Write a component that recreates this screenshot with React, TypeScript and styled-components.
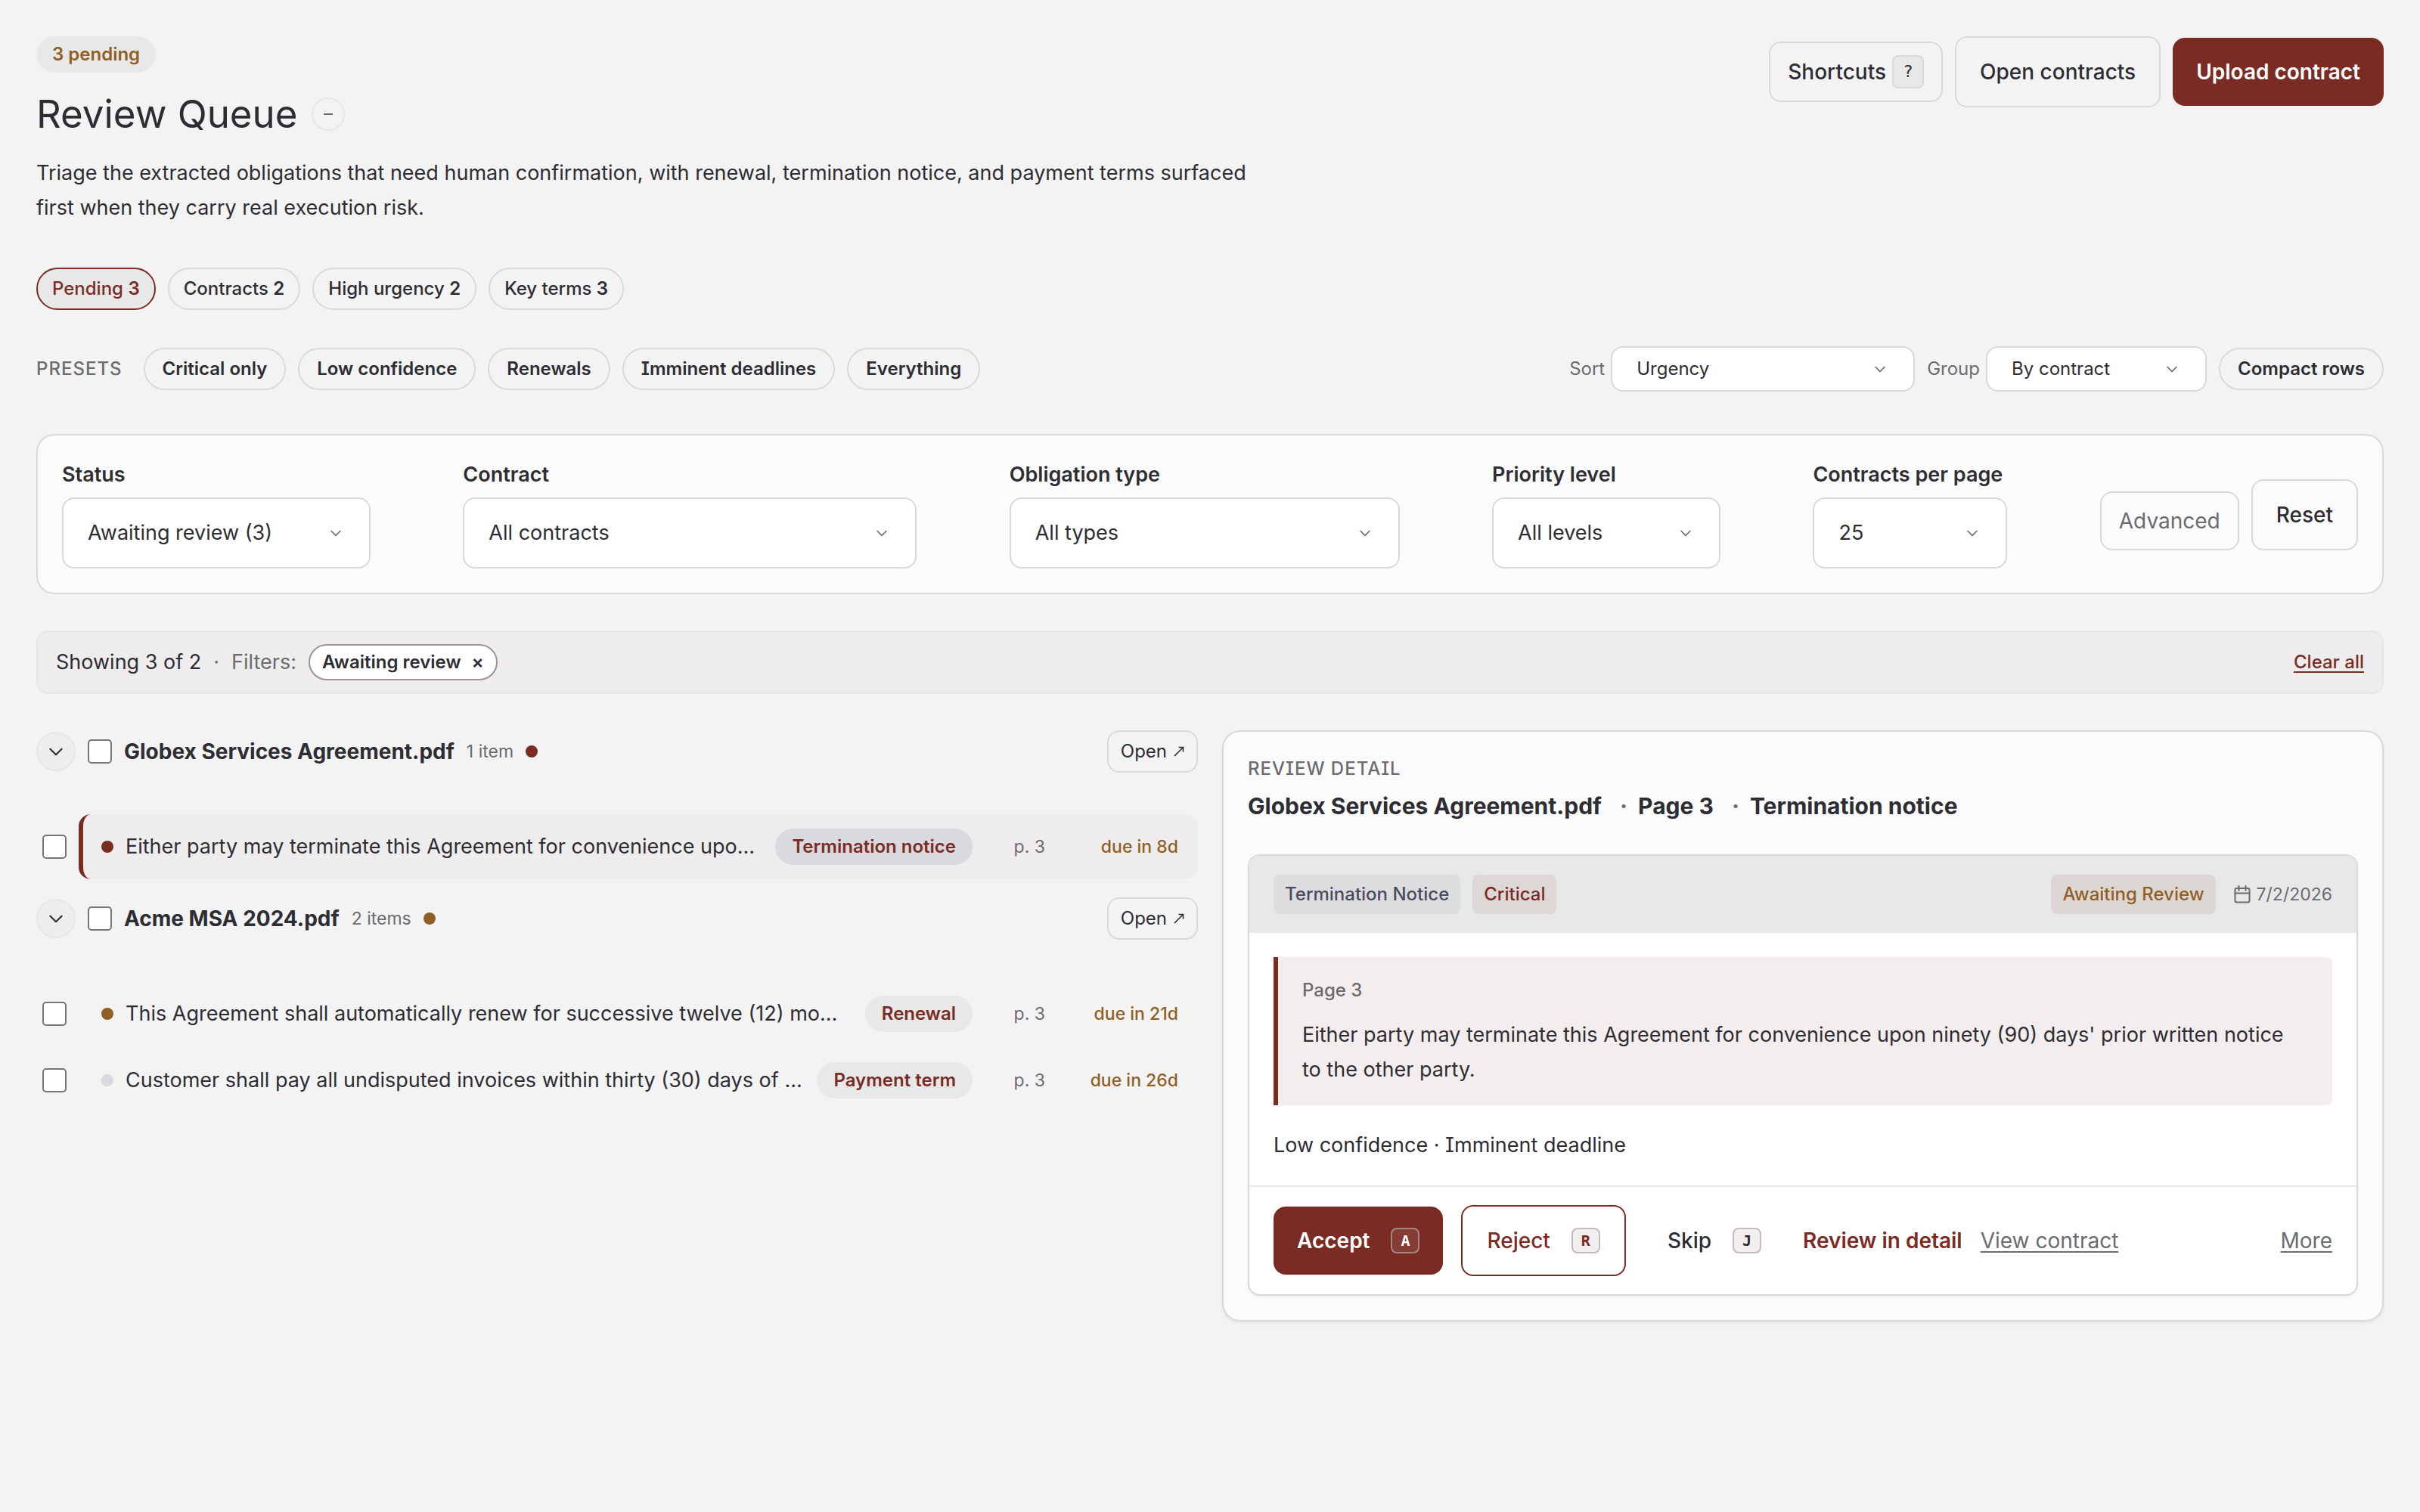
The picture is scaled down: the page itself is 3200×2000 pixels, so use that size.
import React, { useId } from "react";
import styled, { createGlobalStyle, css } from "styled-components";

const color = {
  page: "#f3f3f3",
  panel: "#fbfbfb",
  surface: "#ffffff",
  ink: "#2d2d33",
  muted: "#6b6b70",
  line: "#d8d9de",
  soft: "#e8e8e8",
  tint: "#eeecec",
  quote: "#f3eded",
  brand: "#7a2c24",
  amber: "#8f5f26",
};

const GlobalStyle = createGlobalStyle`
  *, *::before, *::after { box-sizing: border-box; }
  body {
    margin: 0;
    background: ${color.page};
    color: ${color.ink};
    font-family: Inter, "Liberation Sans", sans-serif;
    font-size: 27px;
    line-height: 46px;
    font-feature-settings: "cv08";
  }
  button, select, input { font: inherit; color: inherit; font-feature-settings: inherit; }
  button { cursor: pointer; }
  h1, h2, h3, p, ul, dl { margin: 0; padding: 0; }
  ul { list-style: none; }
`;

const Page = styled.main`
  display: flex;
  flex-direction: column;
  padding: 48px;
`;

/* Header */

const Header = styled.header`
  display: flex;
  justify-content: space-between;
  align-items: flex-start;
`;

const Intro = styled.div`
  display: flex;
  flex-direction: column;
  align-items: flex-start;
  gap: 24px;
`;

const CountBadge = styled.span`
  height: 48px;
  padding: 0 21px;
  border-radius: 24px;
  background: ${color.soft};
  color: ${color.amber};
  font-size: 24px;
  font-weight: 600;
  line-height: 48px;
`;

const TitleRow = styled.div`
  display: flex;
  align-items: center;
  gap: 18px;
`;

const Title = styled.h1`
  font-size: 51px;
  font-weight: 400;
  line-height: 62px;
`;

const RoundButton = styled.button<{ $filled?: boolean; $size: number }>`
  display: flex;
  align-items: center;
  justify-content: center;
  flex: none;
  width: ${(p) => p.$size}px;
  height: ${(p) => p.$size}px;
  padding: 0;
  border: 2px solid #e6e6e6;
  border-radius: 50%;
  background: ${(p) => (p.$filled ? color.tint : "transparent")};
`;

const Lead = styled.p`
  max-width: 1640px;
`;

const HeaderActions = styled.div`
  display: flex;
  align-items: center;
  gap: 16px;
`;

type Tone = "outline" | "primary" | "danger" | "ghost" | "quiet";

const tones = {
  outline: css`
    border: 2px solid ${color.line};
    background: transparent;
  `,
  primary: css`
    height: 90px;
    border: 0;
    background: ${color.brand};
    color: #ffffff;
    font-weight: 600;
  `,
  danger: css`
    padding: 0 32px;
    border: 2px solid ${color.brand};
    background: ${color.surface};
    color: ${color.brand};
  `,
  ghost: css`
    border: 0;
    background: transparent;
  `,
  quiet: css`
    height: 80px;
    padding: 0 23px;
    border: 2px solid ${color.line};
    background: transparent;
  `,
};

const Button = styled.button<{ $tone: Tone; $gap?: number }>`
  display: inline-flex;
  align-items: center;
  justify-content: center;
  gap: ${(p) => p.$gap ?? 28}px;
  height: 94px;
  padding: 0 31px;
  border-radius: 16px;
  font-size: 28px;
  font-weight: 500;
  white-space: nowrap;
  ${(p) => tones[p.$tone]}
`;

const AdvancedButton = styled(Button)`
  height: 78px;
  color: ${color.muted};
  font-weight: 400;
`;

const HintKey = styled.kbd`
  width: 42px;
  height: 44px;
  border: 2px solid ${color.line};
  border-radius: 8px;
  background: ${color.soft};
  font: 22px/40px "DejaVu Sans Mono", monospace;
  text-align: center;
`;

const ActionKey = styled.kbd<{ $onBrand?: boolean }>`
  width: 38px;
  height: 34px;
  border: 2px solid ${(p) => (p.$onBrand ? "#a58580" : "#c2bcbd")};
  border-radius: 8px;
  background: ${(p) => (p.$onBrand ? "#853d33" : "#f2eeee")};
  font: bold 20px/30px "DejaVu Sans Mono", monospace;
  text-align: center;
`;

/* Pills and presets */

const Metrics = styled.ul`
  display: flex;
  gap: 16px;
  margin-top: 56px;
`;

const Metric = styled.button<{ $active?: boolean }>`
  height: 56px;
  padding: 0 19px;
  border: 2px solid ${(p) => (p.$active ? color.brand : color.line)};
  border-radius: 28px;
  background: ${(p) => (p.$active ? color.soft : "transparent")};
  color: ${(p) => (p.$active ? color.brand : color.ink)};
  font-size: 24px;
  font-weight: 500;
  line-height: 48px;
  strong { font-weight: 600; }
`;

const Toolbar = styled.div`
  display: flex;
  justify-content: space-between;
  align-items: center;
  margin-top: 48px;
`;

const ToolGroup = styled.div<{ $gap: number }>`
  display: flex;
  align-items: center;
  gap: ${(p) => p.$gap}px;
`;

const Overline = styled.span`
  color: ${color.muted};
  font-size: 24px;
  font-weight: 500;
  line-height: 34px;
  letter-spacing: 1px;
  text-transform: uppercase;
`;

const PresetList = styled.div`
  display: flex;
  gap: 16px;
  margin-left: 28px;
`;

const Preset = styled.button`
  height: 56px;
  padding: 0 23px;
  border: 2px solid ${color.line};
  border-radius: 28px;
  background: transparent;
  font-size: 24px;
  font-weight: 600;
  line-height: 48px;
`;

const InlineField = styled.div`
  display: flex;
  align-items: center;
  gap: 8px;
  label { color: ${color.muted}; font-size: 24px; }
`;

const SelectShell = styled.span<{ $width: number }>`
  display: grid;
  align-items: center;
  width: ${(p) => p.$width}px;
  > * { grid-area: 1 / 1; }
  > svg { justify-self: end; margin-right: 36px; pointer-events: none; }
`;

const NativeSelect = styled.select<{ $compact?: boolean }>`
  appearance: none;
  width: 100%;
  height: ${(p) => (p.$compact ? 60 : 94)}px;
  padding: 0 72px 0 32px;
  border: 2px solid ${color.line};
  border-radius: 16px;
  background: ${color.surface};
  font-size: ${(p) => (p.$compact ? 24 : 27)}px;
`;

/* Filter panel */

const Filters = styled.section`
  display: flex;
  justify-content: space-between;
  align-items: flex-end;
  margin-top: 56px;
  padding: 32px;
  border: 2px solid ${color.line};
  border-radius: 24px;
  background: ${color.panel};
`;

const Field = styled.div`
  display: flex;
  flex-direction: column;
  gap: 10px;
  label { font-weight: 600; line-height: 40px; }
`;

const FilterActions = styled.div`
  display: flex;
  align-items: flex-end;
  gap: 16px;
  padding-bottom: 24px;
`;

const Summary = styled.section`
  display: flex;
  align-items: center;
  gap: 16px;
  height: 84px;
  margin-top: 48px;
  padding: 0 24px;
  border: 2px solid #e7e6e6;
  border-radius: 16px;
  background: ${color.tint};
`;

const Muted = styled.span`
  color: ${color.muted};
`;

const FilterChip = styled.button`
  height: 48px;
  padding: 0 16px;
  border: 2px solid #9a9495;
  border-radius: 24px;
  background: ${color.surface};
  font-size: 24px;
  font-weight: 600;
  line-height: 40px;
  white-space: pre;
  span { margin-left: 14px; }
`;

const ClearLink = styled.a`
  margin-left: auto;
  color: ${color.brand};
  font-size: 24px;
  font-weight: 500;
  text-underline-offset: 4px;
  text-decoration-thickness: 2px;
`;

/* Queue */

const Split = styled.div`
  display: grid;
  grid-template-columns: repeat(2, minmax(0, 1fr));
  align-items: start;
  gap: 32px;
  margin-top: 48px;
`;

const Queue = styled.div`
  display: flex;
  flex-direction: column;
  gap: 24px;
`;

const Group = styled.section`
  display: flex;
  flex-direction: column;
  gap: 55px;
`;

const GroupHead = styled.header`
  display: flex;
  align-items: center;
  gap: 16px;
`;

const GroupTitle = styled.h2`
  font-size: 28px;
  font-weight: 700;
  line-height: 46px;
`;

const GroupCount = styled.span`
  color: ${color.muted};
  font-size: 23px;
`;

const Dot = styled.span<{ $color: string }>`
  flex: none;
  width: 16px;
  height: 16px;
  border-radius: 50%;
  background: ${(p) => p.$color};
`;

const OpenLink = styled.a`
  display: flex;
  align-items: center;
  gap: 9px;
  height: 56px;
  margin-left: auto;
  padding: 0 16px;
  border: 2px solid ${color.line};
  border-radius: 16px;
  color: ${color.ink};
  font-size: 24px;
  text-decoration: none;
`;

const Tick = styled.input`
  appearance: none;
  flex: none;
  width: 32px;
  height: 32px;
  margin: 0;
  border: 2px solid #767679;
  border-radius: 5px;
  background: ${color.surface};
`;

const Items = styled.ul`
  display: flex;
  flex-direction: column;
  gap: 2px;
`;

const Item = styled.li`
  display: flex;
  align-items: center;
  gap: 16px;
  padding-left: 8px;
`;

const ItemButton = styled.button<{ $selected?: boolean }>`
  display: flex;
  align-items: center;
  flex: 1;
  gap: 16px;
  min-width: 0;
  height: 86px;
  padding: 0 26px 0 24px;
  border: 0 solid ${(p) => (p.$selected ? color.brand : "transparent")};
  border-left-width: 6px;
  border-radius: 16px;
  background: ${(p) => (p.$selected ? color.tint : "transparent")};
  text-align: left;
`;

const Clause = styled.span`
  flex: 1;
  min-width: 0;
  overflow: hidden;
  text-overflow: ellipsis;
  white-space: nowrap;
`;

const TypePill = styled.span<{ $selected?: boolean }>`
  flex: none;
  height: 48px;
  padding: 0 22px;
  border-radius: 24px;
  background: ${(p) => (p.$selected ? "#d8dadf" : color.soft)};
  color: ${color.brand};
  font-size: 24px;
  font-weight: 600;
  line-height: 48px;
`;

const Meta = styled.span<{ $width: number; $due?: boolean }>`
  flex: none;
  width: ${(p) => p.$width}px;
  color: ${(p) => (p.$due ? color.amber : color.muted)};
  font-size: 23px;
  font-weight: ${(p) => (p.$due ? 500 : 400)};
  text-align: right;
`;

/* Detail */

const Detail = styled.aside`
  padding: 32px;
  border: 2px solid ${color.line};
  border-radius: 24px;
  background: ${color.panel};
  box-shadow: 0 2px 4px rgba(45, 45, 51, 0.08);
`;

const DetailHead = styled.header`
  display: flex;
  flex-direction: column;
  gap: 10px;
  margin-bottom: 42px;
`;

const DetailTitle = styled.h2`
  font-size: 30px;
  font-weight: 700;
  line-height: 44px;
  span { margin: 0 14px 0 24px; color: ${color.muted}; }
`;

const Card = styled.article`
  overflow: hidden;
  border: 2px solid ${color.line};
  border-radius: 16px;
  background: ${color.surface};
  box-shadow: 0 2px 4px rgba(45, 45, 51, 0.06);
`;

const CardHead = styled.header`
  display: flex;
  align-items: center;
  gap: 16px;
  height: 102px;
  padding: 0 32px;
  background: ${color.soft};
`;

const Tag = styled.span<{ $bg: string; $ink: string; $push?: boolean }>`
  height: 52px;
  margin-left: ${(p) => (p.$push ? "auto" : 0)};
  padding: 0 15px;
  border-radius: 8px;
  background: ${(p) => p.$bg};
  color: ${(p) => p.$ink};
  font-size: 24px;
  font-weight: 500;
  line-height: 52px;
`;

const DateNote = styled.span`
  display: flex;
  align-items: center;
  gap: 8px;
  margin-left: 8px;
  color: ${color.muted};
  font-size: 23px;
`;

const CardBody = styled.div`
  display: flex;
  flex-direction: column;
  gap: 30px;
  padding: 32px 32px 30px;
`;

const Quote = styled.blockquote`
  display: flex;
  flex-direction: column;
  gap: 18px;
  margin: 0;
  padding: 26px 40px 24px 32px;
  border-left: 6px solid ${color.brand};
  border-radius: 0 8px 8px 0;
  background: ${color.quote};
  cite {
    color: ${color.muted};
    font-size: 24px;
    font-style: normal;
    font-weight: 500;
    line-height: 36px;
  }
`;

const CardFoot = styled.footer`
  display: flex;
  align-items: center;
  gap: 24px;
  padding: 24px 32px;
  border-top: 2px solid #e6e6e6;
`;

const TextButton = styled.button`
  padding: 0;
  border: 0;
  background: none;
  color: ${color.brand};
  font-size: 28px;
  font-weight: 600;
`;

const FootLink = styled.a<{ $push?: boolean }>`
  margin-left: ${(p) => (p.$push ? "auto" : 0)};
  color: ${color.muted};
  font-size: 28px;
  text-underline-offset: 4px;
  text-decoration-thickness: 2px;
`;

const Chevron = ({ size = 24, ink = color.muted }: { size?: number; ink?: string }) => (
  <svg width={size} height={size} viewBox="0 0 24 24" fill="none" stroke={ink} strokeWidth="2" strokeLinecap="round" strokeLinejoin="round" aria-hidden="true">
    <path d="m5 9 7 7 7-7" />
  </svg>
);

const ArrowOut = () => (
  <svg width="14" height="14" viewBox="0 0 14 14" fill="none" stroke={color.ink} strokeWidth="1.6" aria-hidden="true">
    <path d="M1 13 12.5 1.5M6.5 1.5h6v6" />
  </svg>
);

const Calendar = () => (
  <svg width="22" height="24" viewBox="0 0 22 24" fill="none" stroke={color.muted} strokeWidth="2" strokeLinecap="round" strokeLinejoin="round" aria-hidden="true">
    <rect x="1.5" y="4" width="19" height="18.5" rx="2" />
    <path d="M6.5 1v6M15.5 1v6M1.5 10.5h19" />
  </svg>
);

const Minus = () => (
  <svg width="14" height="4" viewBox="0 0 14 4" aria-hidden="true">
    <path d="M1 2h12" stroke={color.muted} strokeWidth="2" />
  </svg>
);

function Select({ label, value, width, compact }: { label: string; value: string; width: number; compact?: boolean }) {
  const id = useId();
  const Wrap = compact ? InlineField : Field;
  return (
    <Wrap>
      <label htmlFor={id}>{label}</label>
      <SelectShell $width={width}>
        <NativeSelect id={id} $compact={compact}>
          <option>{value}</option>
        </NativeSelect>
        <Chevron size={20} />
      </SelectShell>
    </Wrap>
  );
}

const metrics = [
  { label: "Pending", count: 3, active: true },
  { label: "Contracts", count: 2 },
  { label: "High urgency", count: 2 },
  { label: "Key terms", count: 3 },
];

const presets = ["Critical only", "Low confidence", "Renewals", "Imminent deadlines", "Everything"];

const filters = [
  { label: "Status", value: "Awaiting review (3)", width: 408 },
  { label: "Contract", value: "All contracts", width: 600 },
  { label: "Obligation type", value: "All types", width: 516 },
  { label: "Priority level", value: "All levels", width: 302 },
  { label: "Contracts per page", value: "25", width: 257 },
];

const groups = [
  {
    name: "Globex Services Agreement.pdf",
    count: "1 item",
    dot: color.brand,
    items: [
      {
        text: "Either party may terminate this Agreement for convenience upo…",
        type: "Termination notice",
        due: "due in 8d",
        dot: color.brand,
        selected: true,
      },
    ],
  },
  {
    name: "Acme MSA 2024.pdf",
    count: "2 items",
    dot: color.amber,
    items: [
      {
        text: "This Agreement shall automatically renew for successive twelve (12) mo…",
        type: "Renewal",
        due: "due in 21d",
        dot: color.amber,
        selected: false,
      },
      {
        text: "Customer shall pay all undisputed invoices within thirty (30) days of …",
        type: "Payment term",
        due: "due in 26d",
        dot: color.line,
        selected: false,
      },
    ],
  },
];

export default function App() {
  return (
    <>
      <GlobalStyle />
      <Page>
        <Header>
          <Intro>
            <CountBadge>3 pending</CountBadge>
            <TitleRow>
              <Title>Review Queue</Title>
              <RoundButton $size={44} aria-label="Collapse introduction">
                <Minus />
              </RoundButton>
            </TitleRow>
            <Lead>
              Triage the extracted obligations that need human confirmation, with renewal, termination notice, and
              payment terms surfaced first when they carry real execution risk.
            </Lead>
          </Intro>
          <HeaderActions>
            <Button $tone="quiet" $gap={8}>
              Shortcuts <HintKey>?</HintKey>
            </Button>
            <Button $tone="outline">Open contracts</Button>
            <Button $tone="primary">Upload contract</Button>
          </HeaderActions>
        </Header>

        <Metrics>
          {metrics.map((m) => (
            <li key={m.label}>
              <Metric $active={m.active}>
                {m.label} <strong>{m.count}</strong>
              </Metric>
            </li>
          ))}
        </Metrics>

        <Toolbar>
          <ToolGroup $gap={0}>
            <Overline>Presets</Overline>
            <PresetList>
              {presets.map((p) => (
                <Preset key={p}>{p}</Preset>
              ))}
            </PresetList>
          </ToolGroup>
          <ToolGroup $gap={16}>
            <Select compact label="Sort" value="Urgency" width={402} />
            <Select compact label="Group" value="By contract" width={292} />
            <Preset>Compact rows</Preset>
          </ToolGroup>
        </Toolbar>

        <Filters>
          {filters.map((f) => (
            <Select key={f.label} {...f} />
          ))}
          <FilterActions>
            <AdvancedButton $tone="quiet">Advanced</AdvancedButton>
            <Button $tone="outline">Reset</Button>
          </FilterActions>
        </Filters>

        <Summary>
          <span>Showing 3 of 2</span>
          <Muted>·</Muted>
          <Muted>Filters:</Muted>
          <FilterChip>
            Awaiting review<span>×</span>
          </FilterChip>
          <ClearLink href="#clear">Clear all</ClearLink>
        </Summary>

        <Split>
          <Queue>
            {groups.map((g) => (
              <Group key={g.name}>
                <GroupHead>
                  <RoundButton $filled $size={52} aria-label={`Collapse ${g.name}`}>
                    <Chevron size={26} ink={color.ink} />
                  </RoundButton>
                  <Tick type="checkbox" aria-label={`Select ${g.name}`} />
                  <GroupTitle>{g.name}</GroupTitle>
                  <GroupCount>{g.count}</GroupCount>
                  <Dot $color={g.dot} />
                  <OpenLink href="#open">
                    Open <ArrowOut />
                  </OpenLink>
                </GroupHead>
                <Items>
                  {g.items.map((item) => (
                    <Item key={item.type}>
                      <Tick type="checkbox" aria-label={`Select ${item.type}`} />
                      <ItemButton $selected={item.selected}>
                        <Dot $color={item.dot} />
                        <Clause>{item.text}</Clause>
                        <TypePill $selected={item.selected}>{item.type}</TypePill>
                        <Meta $width={80}>p. 3</Meta>
                        <Meta $width={160} $due>
                          {item.due}
                        </Meta>
                      </ItemButton>
                    </Item>
                  ))}
                </Items>
              </Group>
            ))}
          </Queue>

          <Detail>
            <DetailHead>
              <Overline>Review detail</Overline>
              <DetailTitle>
                Globex Services Agreement.pdf<span>·</span>Page 3<span>·</span>Termination notice
              </DetailTitle>
            </DetailHead>
            <Card>
              <CardHead>
                <Tag $bg="#dddde0" $ink="#4b4b5e">
                  Termination Notice
                </Tag>
                <Tag $bg="#ddd7d6" $ink={color.brand}>
                  Critical
                </Tag>
                <Tag $bg="#dcd7d5" $ink={color.amber} $push>
                  Awaiting Review
                </Tag>
                <DateNote>
                  <Calendar />
                  7/2/2026
                </DateNote>
              </CardHead>
              <CardBody>
                <Quote>
                  <cite>Page 3</cite>
                  <p>
                    Either party may terminate this Agreement for convenience upon ninety (90) days' prior written
                    notice to the other party.
                  </p>
                </Quote>
                <p>Low confidence · Imminent deadline</p>
              </CardBody>
              <CardFoot>
                <Button $tone="primary">
                  Accept <ActionKey $onBrand>A</ActionKey>
                </Button>
                <Button $tone="danger">
                  Reject <ActionKey>R</ActionKey>
                </Button>
                <Button $tone="ghost">
                  Skip <ActionKey>J</ActionKey>
                </Button>
                <TextButton>Review in detail</TextButton>
                <FootLink href="#contract">View contract</FootLink>
                <FootLink href="#more" $push>
                  More
                </FootLink>
              </CardFoot>
            </Card>
          </Detail>
        </Split>
      </Page>
    </>
  );
}
